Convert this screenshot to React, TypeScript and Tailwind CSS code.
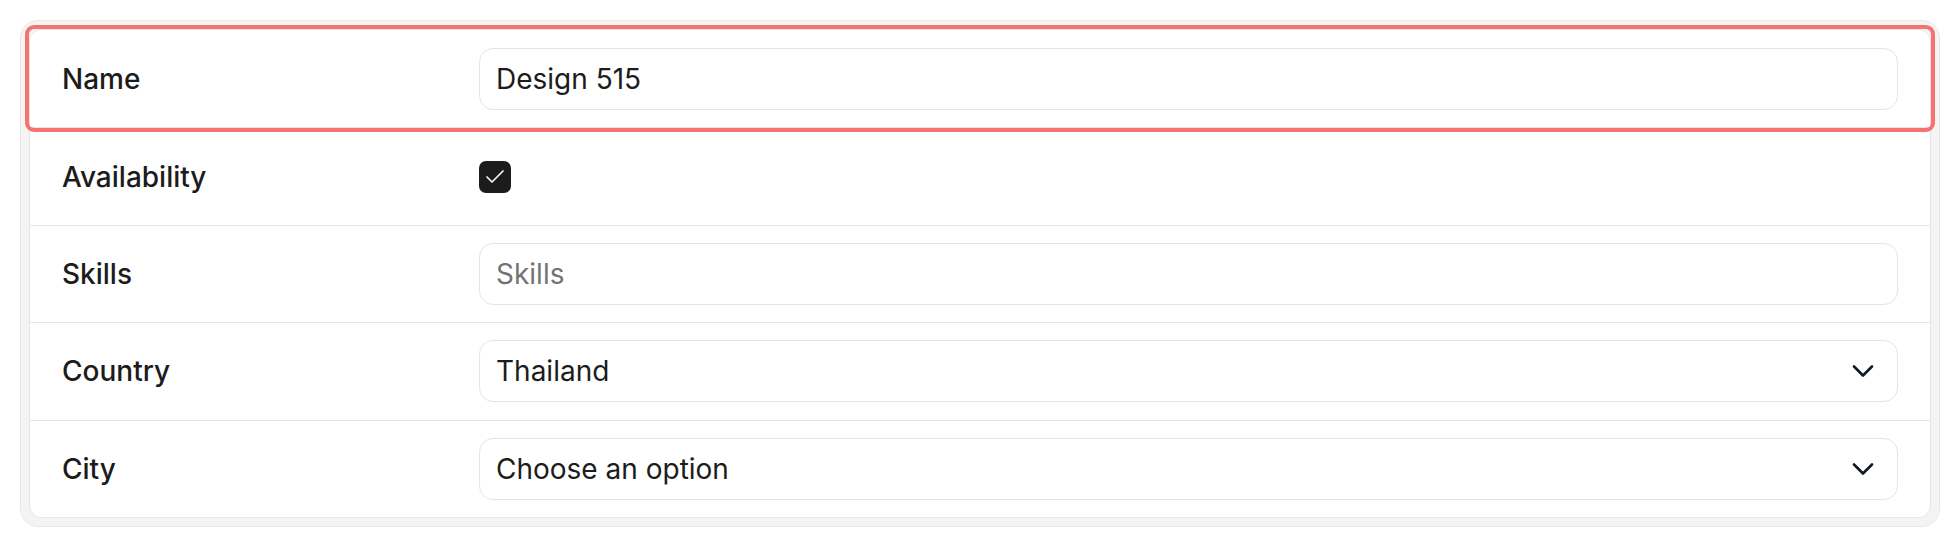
import { Check, ChevronDown } from "lucide-react";

export default function App() {
  const rows = [
    { label: "Name", kind: "text", value: "Design 515" },
    { label: "Availability", kind: "checkbox" },
    { label: "Skills", kind: "text", placeholder: "Skills" },
    { label: "Country", kind: "select", value: "Thailand" },
    { label: "City", kind: "select", value: "Choose an option" },
  ];

  return (
    <div className="bg-white p-5 font-['Inter',sans-serif] text-[#1c1c1c]">
      <div className="rounded-[18px] border border-[#e8e8e8] bg-[#f4f4f4] p-2">
        <div className="rounded-[12px] border border-[#e5e5e5] bg-white">
          {rows.map((row, index) => (
            <div
              key={row.label}
              className={
                "grid h-[97.4px] grid-cols-[417px_1fr] items-center px-8 " +
                (index > 0 ? "border-t border-[#e5e5e5] " : "") +
                (index === 0
                  ? "rounded-[4px] outline-4 outline-offset-1 outline-[#f87171]"
                  : "")
              }
            >
              <span className="text-[28px] font-medium">{row.label}</span>
              {row.kind === "checkbox" && (
                <div className="flex h-8 w-8 items-center justify-center rounded-[7px] bg-[#1c1c1c]">
                  <Check size={24} strokeWidth={1.75} className="text-[#f2f2f2]" />
                </div>
              )}
              {row.kind === "text" && (
                <div className="flex h-[62px] items-center rounded-[14px] border border-[#e5e5e5] px-4 text-[28px]">
                  {row.value ? (
                    <span>{row.value}</span>
                  ) : (
                    <span className="text-[#737373]">{row.placeholder}</span>
                  )}
                </div>
              )}
              {row.kind === "select" && (
                <div className="flex h-[62px] items-center justify-between rounded-[14px] border border-[#e5e5e5] pl-4 pr-4 text-[28px]">
                  <span>{row.value}</span>
                  <ChevronDown size={36} strokeWidth={1.75} className="text-[#111827]" />
                </div>
              )}
            </div>
          ))}
        </div>
      </div>
    </div>
  );
}
